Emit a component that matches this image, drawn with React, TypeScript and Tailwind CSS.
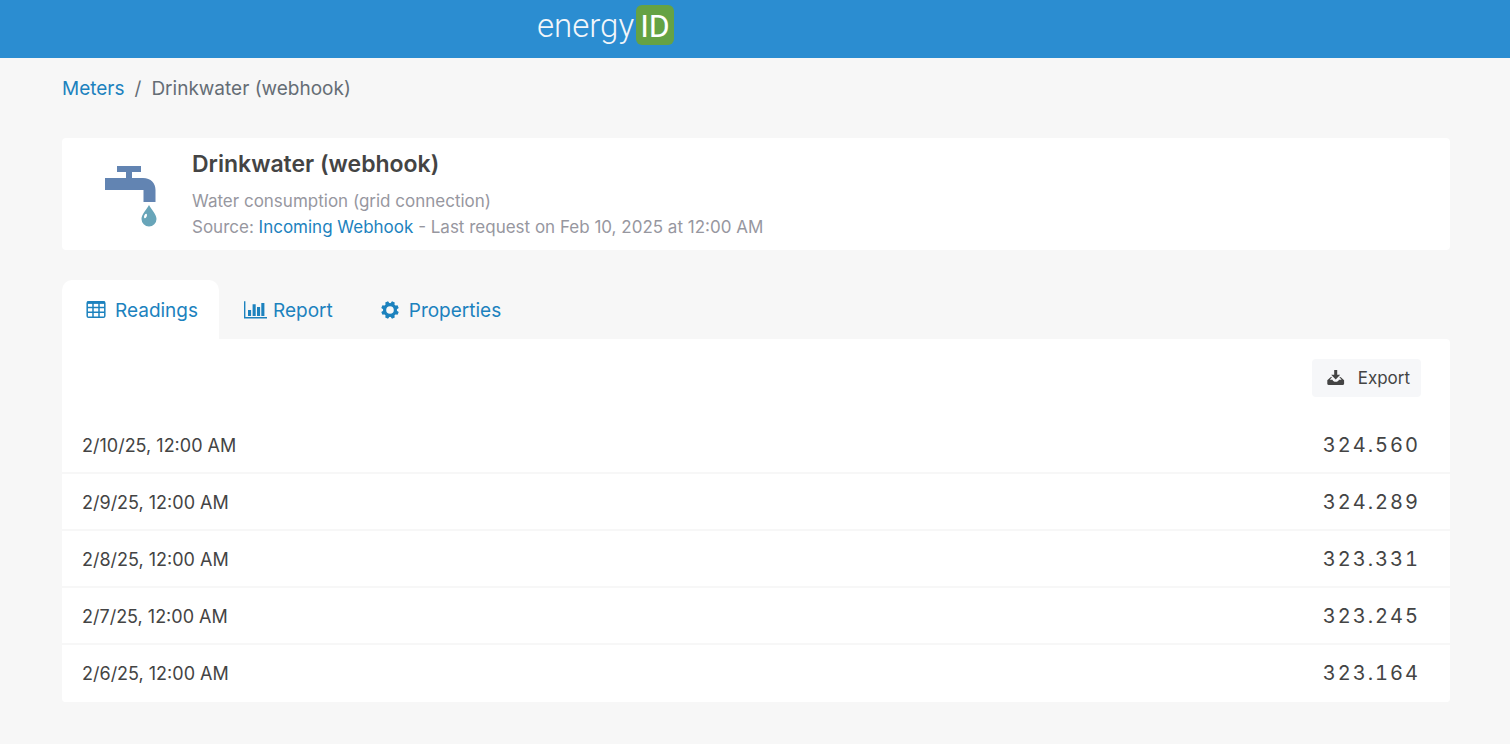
import React, { useState } from 'react';

interface Reading {
  date: string;
  value: string;
}

const readings: Reading[] = [
  { date: '2/10/25, 12:00 AM', value: '324.560' },
  { date: '2/9/25, 12:00 AM', value: '324.289' },
  { date: '2/8/25, 12:00 AM', value: '323.331' },
  { date: '2/7/25, 12:00 AM', value: '323.245' },
  { date: '2/6/25, 12:00 AM', value: '323.164' },
];

const TableIcon: React.FC = () => (
  <svg className="w-5 h-5" viewBox="0 0 20 20" fill="none" stroke="currentColor" aria-hidden="true">
    <rect x="1.2" y="1.7" width="17.6" height="15.6" rx="1.4" strokeWidth="1.5" />
    <path d="M1 2.7h18" strokeWidth="2.4" />
    <path d="M1.2 7.6h17.4M1.2 12.2h17.4M7 3v14M13 3v14" strokeWidth="1.5" />
  </svg>
);

const ChartIcon: React.FC = () => (
  <svg className="w-6 h-5" viewBox="0 0 24 20" fill="currentColor" aria-hidden="true">
    <path d="M1 1.2h1.4v15.9H24v1.5H1z" />
    <path d="M5 10h3.1v6H5zM9.6 4.2h3.1V16H9.6zM14 7.1h3.1V16H14zM18.3 3h3.1v13h-3.1z" />
  </svg>
);

const CogIcon: React.FC = () => (
  <svg className="w-5 h-5" viewBox="0 0 20 20" aria-hidden="true">
    <g fill="currentColor">
      <path
        fillRule="evenodd"
        d="M10 3a7 7 0 1 0 0 14a7 7 0 0 0 0-14zM10 6.2a3.8 3.8 0 1 1 0 7.6a3.8 3.8 0 0 1 0-7.6z"
      />
      {[22.5, 67.5, 112.5, 157.5, 202.5, 247.5, 292.5, 337.5].map((angle) => (
        <path key={angle} transform={`rotate(${angle} 10 10)`} d="M7.8 4.2L8.5 1.2h3l.7 3z" />
      ))}
    </g>
  </svg>
);

const ExportIcon: React.FC = () => (
  <svg className="w-5 h-5" viewBox="0 0 20 20" fill="currentColor" aria-hidden="true">
    <path d="M8.2 2h3v4.8h3L9.7 11.6 5.2 6.8h3z" />
    <path d="M4.6 9.2l1.7-.5-2.5 3h2.7c.5 1.5 1.5 2.1 3.2 2.1s2.700-.6 3.200-2.100h2.700l-2.500-3 1.700.5 3.300 3v3.600c0 .7-.5 1.200-1.200 1.200H2.500c-.7 0-1.200-.5-1.200-1.200v-3.600z" />
  </svg>
);

const TapIcon: React.FC = () => (
  <svg className="w-16 h-16" viewBox="0 0 64 64" aria-hidden="true">
    <path fill="#6284b2" d="M18 2h24v6h-9v6h11c8 0 12.5 5 12.5 12v12h-12V26H6V14h21V8h-9z" />
    <path fill="#68a5b9" d="M50 41c2.5 5 7.5 9 7.5 14a7.5 7.5 0 0 1-15 0c0-5 5-9 7.5-14z" />
    <ellipse cx="46.5" cy="52" rx="1.3" ry="2.4" transform="rotate(22 46.5 52)" fill="#fff" />
  </svg>
);

const tabs = [
  { id: 'readings', label: 'Readings', icon: <TableIcon />, className: 'gap-[9px] pl-6' },
  { id: 'report', label: 'Report', icon: <ChartIcon />, className: 'gap-1.5 pl-6' },
  { id: 'properties', label: 'Properties', icon: <CogIcon />, className: 'gap-[9px] pl-[26px]' },
];

const App: React.FC = () => {
  const [activeTab, setActiveTab] = useState('readings');

  return (
    <div className="min-h-screen bg-[#f7f7f7] text-[#444] font-['Inter',sans-serif]">
      <header className="h-[58px] pt-[5px] pl-[537px] bg-[#2b8dd1]">
        <a href="#" className="inline-block">
          <svg className="w-[138px] h-10 font-['Roboto',sans-serif]" viewBox="0 0 138 40" aria-label="energyID">
            <rect x="99" y="0" width="38" height="40" rx="6" fill="#65a244" />
            <text x="0" y="32" fontSize="33" fontWeight="300" fill="#f2f6fa">
              energy
            </text>
            <text x="118" y="32" fontSize="32" textAnchor="middle" fill="#fff">
              ID
            </text>
          </svg>
        </a>
      </header>

      <div className="pl-[62px] pr-[60px]">
        <nav className="h-20 pt-[17px] flex gap-2.5 text-[19px] leading-7" aria-label="Breadcrumb">
          <a href="#" className="text-[#1c82be]">Meters</a>
          <span className="text-[#656d75]">/</span>
          <span className="text-[#656d75]">Drinkwater (webhook)</span>
        </nav>

        <section className="h-28 rounded bg-white flex">
          <div className="w-[130px] pl-[37px] pt-[26px]">
            <TapIcon />
          </div>
          <div className="pt-2">
            <h1 className="text-[23px] leading-9 font-semibold">Drinkwater (webhook)</h1>
            <p className="mt-1.5 text-[17px] leading-[26px] text-[#97979f]">
              Water consumption (grid connection)
              <br />
              Source: <a href="#" className="text-[#1c82be]">Incoming Webhook</a> - Last request on Feb 10, 2025 at 12:00 AM
            </p>
          </div>
        </section>

        <div className="mt-[30px] flex" role="tablist">
          {tabs.map((tab) => (
            <button
              key={tab.id}
              type="button"
              role="tab"
              aria-selected={activeTab === tab.id}
              onClick={() => setActiveTab(tab.id)}
              className={`h-[59px] pr-[21px] flex items-center rounded-t-[10px] text-[19px] text-[#1c82be] ${tab.className} ${
                activeTab === tab.id ? 'bg-white' : ''
              }`}
            >
              {tab.icon}
              <span className="pt-[3px] leading-7">{tab.label}</span>
            </button>
          ))}
        </div>

        <main className="rounded-r rounded-bl bg-white">
          <div className="flex justify-end py-5 pr-[29px]">
            <button
              type="button"
              className="h-[38px] pl-3.5 pr-[11px] flex items-center gap-3 rounded bg-[#f6f7f9] text-[17px]"
            >
              <ExportIcon />
              <span className="pt-px">Export</span>
            </button>
          </div>
          <table className="w-full border-separate border-spacing-0">
            <tbody>
              {readings.map((reading) => (
                <tr key={reading.date} className="group">
                  <td className="h-[57px] pt-0.5 pl-5 text-lg border-b-2 border-[#f7f7f7] group-last:border-white group-last:rounded-bl">
                    {reading.date}
                  </td>
                  <td className="h-[57px] pr-7 text-right text-xl tracking-[2px] tabular-nums border-b-2 border-[#f7f7f7] group-last:border-white group-last:rounded-br">
                    <span className="pr-0.5">{reading.value}</span>
                  </td>
                </tr>
              ))}
            </tbody>
          </table>
        </main>
      </div>
    </div>
  );
};

export default App;
